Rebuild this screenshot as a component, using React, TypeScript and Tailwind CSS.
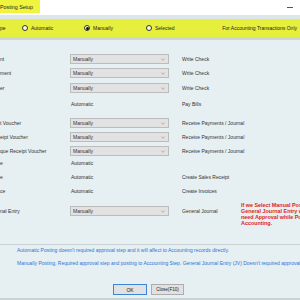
import React from "react";

type Row = {
  label: string;
  mode: "select" | "auto";
  right: string;
  mt: string;
  note?: boolean;
};

const rows: Row[] = [
  { label: "nt", mode: "select", right: "Write Check", mt: "mt-0" },
  { label: "ment", mode: "select", right: "Write Check", mt: "mt-[2px]" },
  { label: "er", mode: "select", right: "Write Check", mt: "mt-[3px]" },
  { label: "", mode: "auto", right: "Pay Bills", mt: "mt-[4px]" },
  { label: "t Voucher", mode: "select", right: "Receive Payments / Journal", mt: "mt-[7px]" },
  { label: "eipt Voucher", mode: "select", right: "Receive Payments / Journal", mt: "mt-[2px]" },
  { label: "que Receipt Voucher", mode: "select", right: "Receive Payments / Journal", mt: "mt-[2px]" },
  { label: "e", mode: "auto", right: "", mt: "mt-0" },
  { label: "e", mode: "auto", right: "Create Sales Receipt", mt: "mt-[2px]" },
  { label: "ce", mode: "auto", right: "Create Invoices", mt: "mt-[2px]" },
  { label: "nal Entry", mode: "select", right: "General Journal", mt: "mt-[8px]", note: true },
];

function Radio({ checked }: { checked?: boolean }) {
  return (
    <span className="w-[6px] h-[6px] rounded-full border border-[#333] bg-[#f7fbe0] flex items-center justify-center shrink-0">
      {checked && <span className="w-[3px] h-[3px] rounded-full bg-[#111]" />}
    </span>
  );
}

function Select() {
  return (
    <div className="w-[99px] h-[10px] bg-[#e2e2e2] border border-[#bcbcbc] flex items-center justify-between pl-[2px] pr-[3px] text-[#333]">
      <span>Manually</span>
      <svg width="4" height="3" viewBox="0 0 4 3">
        <path d="M0.3 0.5 L2 2.3 L3.7 0.5" fill="none" stroke="#8a8a8a" strokeWidth="0.6" />
      </svg>
    </div>
  );
}

export default function App() {
  return (
    <div
      className="w-[300px] h-[300px] overflow-hidden bg-[#e6eff2] text-[5px] leading-[6px] text-[#333] flex flex-col"
      style={{ fontFamily: '"Liberation Sans", Arial, sans-serif' }}
    >
      {/* title bar */}
      <div className="h-[15px] bg-white flex items-start justify-between shrink-0">
        <div className="w-[40px] h-[13px] bg-[#eef53c] flex items-center text-[5.3px] text-[#222]">
          Posting Setup
        </div>
        <div className="w-[6px] h-[1px] bg-[#555] mt-[7px] mr-[7px]" />
      </div>
      <div className="h-[4px] bg-[#dde7ea] shrink-0" />
      {/* yellow option bar */}
      <div className="h-[18px] bg-[#e6ef3c] flex items-center text-[#222] shrink-0">
        <span className="w-[22px]">pe</span>
        <div className="w-[62px] flex items-center">
          <Radio />
          <span className="ml-[3px]">Automatic</span>
        </div>
        <div className="w-[62px] flex items-center">
          <Radio checked />
          <span className="ml-[3px]">Manually</span>
        </div>
        <div className="w-[62px] flex items-center">
          <Radio />
          <span className="ml-[3px]">Selected</span>
        </div>
        <span className="ml-auto mr-[3px]">For Accounting Transactions Only</span>
      </div>
      <div className="h-[3px] bg-[#cbd7db] shrink-0" />

      {/* rows */}
      <div className="flex flex-col pt-[13px]">
        {rows.map((r, i) => (
          <div key={i} className={`h-[12px] flex items-center ${r.mt}`}>
            <span className="w-[70px] shrink-0 whitespace-nowrap overflow-hidden">{r.label}</span>
            <div className="w-[112px] shrink-0">
              {r.mode === "select" ? <Select /> : <span className="ml-[1px]">Automatic</span>}
            </div>
            <span className="w-[59px] shrink-0 whitespace-nowrap">{r.right}</span>
            {r.note && (
              <div className="h-[25px] mt-[6px] shrink-0 flex flex-col text-[#e11d1d] font-bold text-[5.4px] leading-[6.2px] whitespace-nowrap">
                <span>If we Select Manual Posting</span>
                <span>General Journal Entry will</span>
                <span>need Approval while Posting to</span>
                <span>Accounting.</span>
              </div>
            )}
          </div>
        ))}
      </div>

      {/* info */}
      <div className="mt-[27px] border-t border-[#c9d3d6] flex flex-col pl-[17px] text-[#2f74d6] whitespace-nowrap">
        <span className="mt-[2px]">
          Automatic Posting doesn't required approval step and it will affect to Accounting records directly.
        </span>
        <span className="mt-[7px]">
          Manually Posting, Required approval step and posting to Accounting Step. General Journal Entry (JV) Doesn't required approval.
        </span>
      </div>

      {/* buttons */}
      <div className="mt-[18px] flex justify-center gap-[4px] pr-[3px]">
        <div className="w-[34px] h-[11px] bg-[#e1e1e1] border border-[#3b86d8] flex items-center justify-center text-[#222]">
          OK
        </div>
        <div className="w-[33px] h-[11px] bg-[#e1e1e1] border border-[#adadad] flex items-center justify-center text-[#222] text-[4.6px] whitespace-nowrap">
          Close(F10)
        </div>
      </div>
      <div className="mt-auto h-[2px] bg-[#c9d3d6]" />
    </div>
  );
}
